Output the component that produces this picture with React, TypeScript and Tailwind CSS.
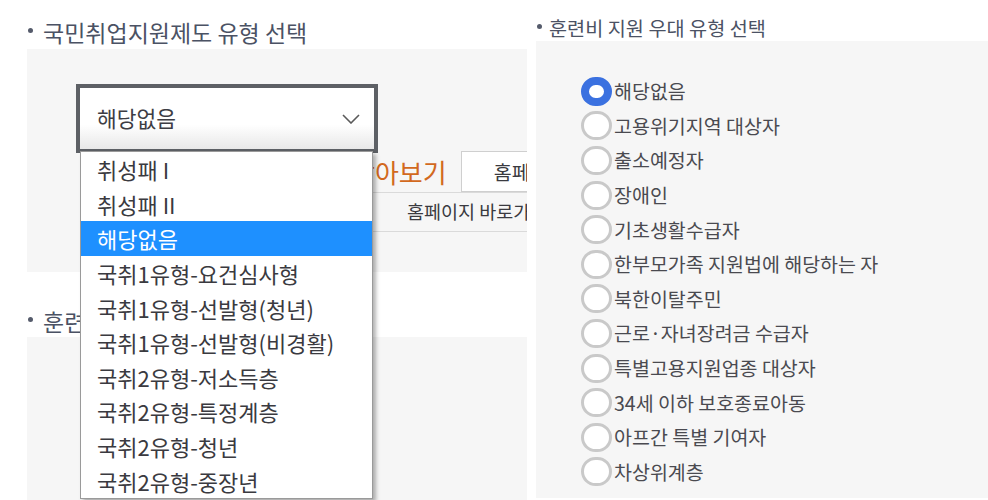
import React from 'react';

const FONT = "font-['Noto_Sans_CJK_KR','Noto_Sans',sans-serif]";

const programOptions = [
  '취성패 I',
  '취성패 II',
  '해당없음',
  '국취1유형-요건심사형',
  '국취1유형-선발형(청년)',
  '국취1유형-선발형(비경활)',
  '국취2유형-저소득층',
  '국취2유형-특정계층',
  '국취2유형-청년',
  '국취2유형-중장년',
];

const preferenceOptions = [
  '해당없음',
  '고용위기지역 대상자',
  '출소예정자',
  '장애인',
  '기초생활수급자',
  '한부모가족 지원법에 해당하는 자',
  '북한이탈주민',
  '근로·자녀장려금 수급자',
  '특별고용지원업종 대상자',
  '34세 이하 보호종료아동',
  '아프간 특별 기여자',
  '차상위계층',
];

const SectionTitle: React.FC<{ label: string; big?: boolean }> = ({ label, big }) => (
  <div className={`flex items-center text-[#4b5264] ${big ? 'text-[23px] leading-[30px]' : 'text-[19.7px] leading-[27px]'}`}>
    <span className={`rounded-full bg-[#555b6b] w-[5px] h-[5px] ${big ? 'ml-[28px] mr-[10px] -mt-[3px]' : 'ml-[1px] mr-[7px] -mt-[2px]'}`} />
    <span>{label}</span>
  </div>
);

const ProgramSelect: React.FC = () => (
  <div className="relative w-[302px] h-[69px]">
    <div className="w-full h-full border-4 border-[#5d6065] bg-linear-to-b from-white from-60% to-[#e8e8e8] flex items-center justify-between pl-[17px] pr-[14px]">
      <span className="text-[21.5px] text-[#3d3d44]">해당없음</span>
      <svg width="18" height="10" viewBox="0 0 18 10">
        <polyline points="1,1 9,9 17,1" fill="none" stroke="#5a5a5a" strokeWidth="1.6" />
      </svg>
    </div>
    {/* open option list */}
    <ul className="absolute left-[4px] top-[67px] w-[293px] bg-white border border-[#9a9a9a] shadow-[3px_3px_4px_rgba(0,0,0,0.3)] z-20">
      {programOptions.map((opt) => (
        <li
          key={opt}
          className={`h-[34.6px] flex items-center pl-[16px] text-[22px] leading-[28px] whitespace-nowrap ${
            opt === '해당없음' ? 'bg-[#1e90ff] text-white' : 'text-[#3a3a40]'
          }`}
        >
          {opt}
        </li>
      ))}
    </ul>
  </div>
);

const Radio: React.FC<{ checked?: boolean; label: string }> = ({ checked, label }) => (
  <label className="h-[34.6px] flex items-center">
    <span
      className={`w-[31px] h-[29px] rounded-full bg-white shrink-0 ${
        checked ? 'border-[8px] border-[#3b71e0]' : 'border-[3px] border-[#c9c9c9]'
      }`}
    />
    <span className="ml-[2px] text-[19.5px] leading-[26px] text-[#4a4a50] whitespace-nowrap">{label}</span>
  </label>
);

const App: React.FC = () => {
  return (
    <div className={`flex w-[988px] h-[500px] bg-white overflow-hidden ${FONT}`}>
      {/* Left: 국민취업지원제도 */}
      <div className="w-[527px] shrink-0 overflow-hidden">
        <div className="pt-[17px] pb-[2px]">
          <SectionTitle label="국민취업지원제도 유형 선택" big />
        </div>
        <div className="ml-[27px] w-[560px] h-[223px] bg-[#f6f6f6] relative z-10">
          <div className="pt-[35px] pl-[49px]">
            <ProgramSelect />
          </div>
          <div className="ml-[273px] -mt-[2px] whitespace-nowrap">
            <div className="h-[42px] flex items-center border-b border-[#dadada]">
              <span className="ml-[51px] text-[26px] text-[#d2691e]">찾아보기</span>
              <span className="ml-[14px] h-[41px] -mb-[1px] self-start flex items-center px-[32px] border border-[#cfcfcf] bg-white text-[19.5px] text-[#3a3a40]">
                홈페이지 바로가기
              </span>
            </div>
            <div className="h-[39px] flex items-center border-b border-[#dadada]">
              <span className="ml-[107px] text-[18.5px] text-[#3a3a40]">홈페이지 바로가기</span>
            </div>
          </div>
        </div>
        <div className="pt-[34px] pb-[1px]">
          <SectionTitle label="훈련비 지원 우대 유형 선택" big />
        </div>
        <div className="ml-[27px] w-[560px] h-[200px] bg-[#f6f6f6]" />
      </div>

      {/* Right: 훈련비 지원 우대 유형 */}
      <div className="flex-1 pl-[9px]">
        <div className="pt-[14px]">
          <SectionTitle label="훈련비 지원 우대 유형 선택" />
        </div>
        <div className="h-[457px] bg-[#f6f6f6] pt-[33px] pl-[45px]">
          {preferenceOptions.map((opt, i) => (
            <Radio key={opt} label={opt} checked={i === 0} />
          ))}
        </div>
      </div>
    </div>
  );
};

export default App;
